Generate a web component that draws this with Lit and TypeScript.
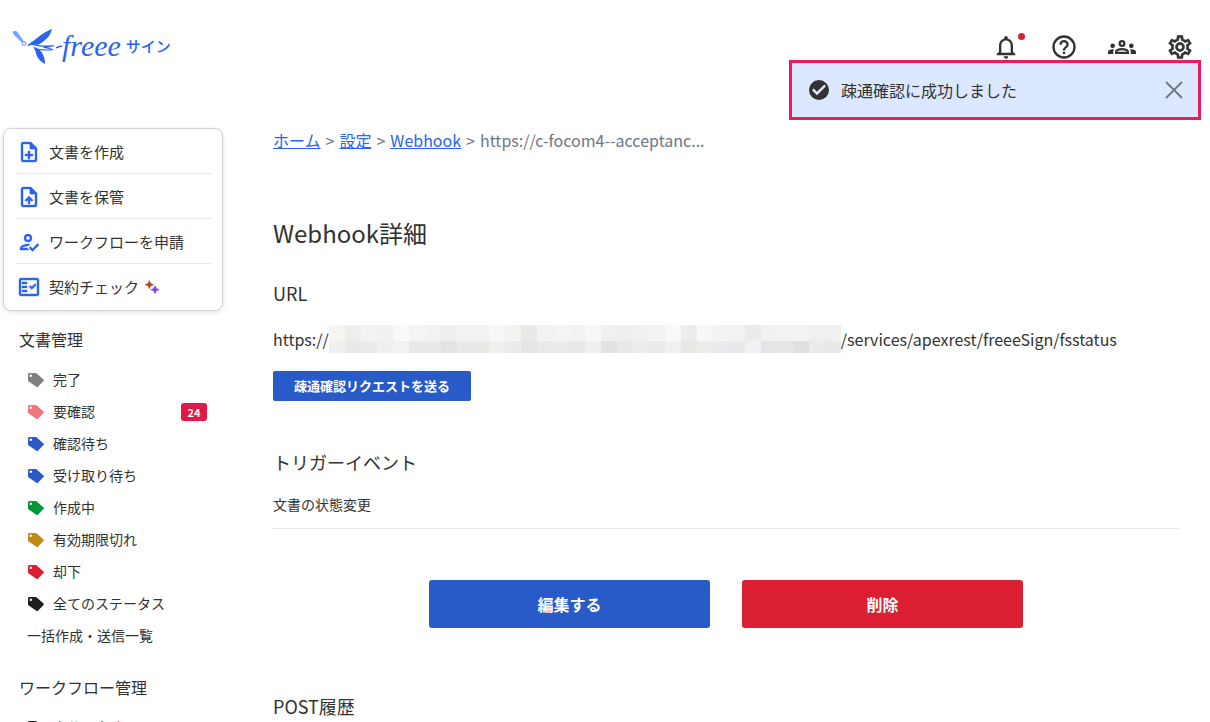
import { LitElement, html, css, svg } from "lit";
import { customElement } from "lit/decorators.js";
import { styleMap } from "lit/directives/style-map.js";

interface Status {
  label: string;
  color: string;
  count?: number;
}

const statuses: Status[] = [
  { label: "完了", color: "#808080" },
  { label: "要確認", color: "#f0757f", count: 24 },
  { label: "確認待ち", color: "#285ac8" },
  { label: "受け取り待ち", color: "#285ac8" },
  { label: "作成中", color: "#00963c" },
  { label: "有効期限切れ", color: "#be8c14" },
  { label: "却下", color: "#dc1e32" },
  { label: "全てのステータス", color: "#1e1e1e" },
];

const icons = {
  create: svg`<path d="M6 2a2 2 0 0 0-2 2v16a2 2 0 0 0 2 2h12a2 2 0 0 0 2-2V8l-6-6Zm0 2h7v5h5v11H6Z" fill-rule="evenodd"/><path d="M13 3v6h6ZM11 11h2v3h3v2h-3v3h-2v-3H8v-2h3Z"/>`,
  store: svg`<path d="M6 2a2 2 0 0 0-2 2v16a2 2 0 0 0 2 2h12a2 2 0 0 0 2-2V8l-6-6Zm0 2h7v5h5v11H6Z" fill-rule="evenodd"/><path d="M13 3v6h6ZM12 11l4.2 4.2-1.4 1.4-1.8-1.7V19h-2v-4.100l-1.800 1.700-1.400-1.400Z"/>`,
  apply: svg`<path d="M11 12a4 4 0 1 0 0-8 4 4 0 0 0 0 8Zm0-6a2 2 0 1 1 0 4 2 2 0 0 1 0-4ZM5 18c.2-.6 3.300-2 6-2l2-2c-4-.5-10 1.300-10 4v2h9l-2-2ZM20.600 13.500 15.500 18.700 13.400 16.600 12 18l3.500 3.500 6.500-6.600Z"/>`,
  check: svg`<path d="M20 3H4a2 2 0 0 0-2 2v14c0 1.100.9 2 2 2h16a2 2 0 0 0 2-2V5a2 2 0 0 0-2-2Zm0 16H4V5h16Z" fill-rule="evenodd"/><path d="M19.400 10 18 8.600l-3.200 3.200-1.400-1.400-1.400 1.400 2.800 2.800ZM5 7h5v2H5ZM5 11h5v2H5ZM5 15h5v2H5Z"/>`,
};

const actions = [
  { label: "文書を作成", icon: icons.create },
  { label: "文書を保管", icon: icons.store },
  { label: "ワークフローを申請", icon: icons.apply },
  { label: "契約チェック", icon: icons.check, sparkle: true },
];

const maskColors = [
  "#f5f5f2 #eeeeee #f3f3f3 #f1f1f1 #f7faf9 #f4f4f2 #f2f2f2 #eeeeee #f2f2f2 #f2f2f2 #f7f7f7 #f3f3f0 #e9e9e9 #f0f3f2 #f4f4f5 #f2f2f2 #f7f7f8 #f0f0f0 #eeeeec #eff2f1 #f3f3f3 #f7faf8 #ededed #f7f7f7 #f1f4f3 #f2f2f2 #e9eceb #f1f1f2 #f1f3f2 #f2f2f2 #f0f0f0 #f0f0f0",
  "#efefef #e9e9e9 #eceae9 #edf0ee #f0f3f2 #e9e9e6 #e9e9e9 #e4e4e4 #e9e9e9 #e9e9e6 #edf0ef #ebebe9 #e5e5e8 #e9ebea #ebebec #eae8e6 #eef0ef #e2e2e2 #e6e9e8 #ececec #ebebe9 #eff1f0 #e8e8e5 #ececec #eaebee #e9e9e9 #f0f1f4 #e5e5e5 #e6e6e6 #dfe0e2 #ebebeb #e9e9e9",
].map((row) => row.split(" "));

@customElement("app-root")
export class AppRoot extends LitElement {
  static styles = css`
    :host {
      display: block;
      height: 100vh;
      overflow: hidden;
      background: #fff;
      color: #323232;
      font-family: "Noto Sans CJK JP", sans-serif;
      font-size: 16px;
      line-height: 24px;
    }
    * { box-sizing: border-box; }
    h1, h2, p, ul, ol { margin: 0; padding: 0; font-weight: 400; }
    ul, ol { list-style: none; }
    a { color: inherit; text-decoration: none; }
    button { font: inherit; border: 0; padding: 0; cursor: pointer; background: none; color: inherit; }
    svg { display: block; flex: none; fill: currentColor; }

    header {
      display: flex;
      justify-content: space-between;
      align-items: center;
      height: 94px;
      padding: 0 16px 0 12px;
    }
    .logo { display: flex; align-items: center; color: #2864f0; }
    .word {
      padding-bottom: 2px;
      font-family: "Liberation Serif", serif;
      font-style: italic;
      font-size: 30px;
      line-height: 36px;
    }
    .product { margin-left: 5px; padding-bottom: 2px; font-size: 15px; font-weight: 500; }
    .tools { display: flex; gap: 30px; }
    .tools button { position: relative; width: 28px; height: 28px; }
    .dot {
      position: absolute;
      top: 0;
      right: -5px;
      width: 7px;
      height: 7px;
      border-radius: 50%;
      background: #dc1e32;
    }

    .toast {
      position: absolute;
      top: 60px;
      right: 9px;
      width: 412px;
      height: 60px;
      display: flex;
      align-items: center;
      gap: 10px;
      padding: 0 12px 0 15px;
      border: 3px solid #f0195f;
      background: #dce8ff;
    }
    .toast p { flex: 1; }
    .close { color: #6e7782; }

    .page { display: flex; gap: 50px; padding: 34px 31px 0 3px; }
    nav.side { width: 220px; flex: none; }
    .card {
      padding: 0 11px 2px 13px;
      border: 1px solid #d7d2d2;
      border-radius: 8px;
      box-shadow: 0 1px 4px rgba(0, 0, 0, 0.14);
      font-size: 15px;
    }
    .card li + li { border-top: 1px solid #e9e7e7; }
    .card a { display: flex; align-items: center; height: 44px; padding-top: 2px; gap: 8px; }
    .card a > svg:first-child { color: #2864f0; stroke: currentColor; stroke-width: 0.4; }
    .card .sparkle { margin-left: -3px; }
    .side h2 { margin: 16px 0 13px 16px; font-size: 16px; }
    .list { font-size: 14px; padding: 0 16px 0 24px; }
    .list a { display: flex; align-items: center; height: 32px; gap: 8px; }
    .label { padding-bottom: 2px; }
    .badge {
      margin-left: auto;
      width: 26px;
      line-height: 18px;
      border-radius: 3px;
      background: #e1194b;
      color: #fff;
      font-size: 11px;
      font-weight: 700;
      text-align: center;
    }
    .side .list + h2 { margin-top: 23px; }

    main { flex: 1; min-width: 0; }
    .crumbs { display: flex; gap: 5px; color: #6e7782; line-height: 24px; }
    .crumbs li { display: flex; gap: 5px; }
    .crumbs a { color: #2864f0; text-decoration: underline; }
    h1 { margin-top: 63px; font-size: 24px; line-height: 36px; }
    main h2 { font-size: 18px; line-height: 28px; }
    .h-url { margin-top: 28px; }
    .url { display: flex; margin-top: 18px; height: 28px; line-height: 28px; }
    .mask {
      display: grid;
      grid-template-columns: repeat(32, 16px);
      grid-template-rows: 16px 12px;
    }
    .btn { border-radius: 3px; background: #285ac8; color: #fff; font-weight: 700; }
    .ping { display: block; margin-top: 18px; height: 30px; padding: 0 21px; font-size: 13px; border-radius: 2px; }
    .h-event { margin-top: 47px; }
    .events { margin-top: 16px; padding-bottom: 12px; border-bottom: 1px solid #e9e7e7; font-size: 14px; }
    .row { display: flex; justify-content: center; gap: 32px; margin-top: 51px; }
    .row .btn { width: 31%; height: 48px; }
    .row .danger { background: #dc1e32; }
    .h-post { margin-top: 64px; }
  `;

  private icon(body: unknown, size = 24, cls = "") {
    return html`<svg class=${cls} width=${size} height=${size} viewBox="0 0 24 24" aria-hidden="true">${body}</svg>`;
  }

  private tag(color: string) {
    return html`<svg width="18" height="18" viewBox="0 0 18 18" aria-hidden="true">
      <path fill=${color} fill-rule="evenodd" d="M1 3.200A1.200 1.200 0 0 1 2.200 2h6.200a2 2 0 0 1 1.400.6l6.700 6a1 1 0 0 1 0 1.500l-5.300 5.500a1.500 1.500 0 0 1-2.200 0L1.700 10.600A2 2 0 0 1 1 9.200ZM3.800 3.600A1.200 1.200 0 1 0 3.800 6a1.200 1.200 0 0 0 0-2.400Z"/></svg>`;
  }

  private logo() {
    return html`<a class="logo" href="#" aria-label="freee サイン">
      <svg width="50" height="36" viewBox="12 30 50 36" aria-hidden="true">
        <path fill="#73a5ff" d="M13.200 32.500c1.400-1.500 3.400-.6 4.800 1.300l5.600 8.200-1.900 1.500-6.800-6.700c-1.500-1.500-2.500-3.200-1.700-4.300Z"/>
        <circle cx="24" cy="44.500" r="1.900" fill="none" stroke="#73a5ff" stroke-width="1.200"/>
        <path d="M52 30c-1.200 6.500-6.200 11.500-13.800 15.800l-8 .3-3 .5 3.800-3C37 39.500 42.500 33.500 52 30Z"/>
        <path d="M33 47.200c2.500 1.600 3.300 1.200 5.300 2.500 4 3.300 7 8.600 6.700 15.300-6.200-3.200-8.800-8.200-9.400-12.500-.8-2-1.600-3.600-2.600-5.300Z"/>
        <path fill="none" stroke="currentColor" stroke-width="1.100" d="M28 46.600c3-2.200 5.500-1.200 8-.3 5 1.800 11 .4 18 .4-4.500.7-7.500 1.700-10.500 1.800 3.500.2 6 .8 9.500 2.300-5 0-9 .9-14.500-.6"/>
        <path fill="none" stroke="currentColor" stroke-width="1.600" d="M56 48.800c2-.8 3.500-1.600 6-1.800"/>
      </svg>
      <span class="word">freee</span><span class="product">サイン</span>
    </a>`;
  }

  render() {
    return html`
      <header>
        ${this.logo()}
        <div class="tools">
          <button aria-label="通知">
            ${this.icon(svg`<path d="M12 22a2 2 0 0 0 2-2h-4a2 2 0 0 0 2 2Zm6-6v-5c0-3.070-1.630-5.640-4.500-6.320V4a1.500 1.500 0 0 0-3 0v.68C7.640 5.360 6 7.920 6 11v5l-2 2v1h16v-1Zm-2 1H8v-6c0-2.480 1.510-4.500 4-4.500s4 2.020 4 4.500Z"/>`, 28)}
            <span class="dot"></span>
          </button>
          <button aria-label="ヘルプ">
            ${this.icon(svg`<path d="M11 18h2v-2h-2Zm1-16a10 10 0 1 0 0 20 10 10 0 0 0 0-20Zm0 18a8 8 0 1 1 0-16 8 8 0 0 1 0 16Zm0-14a4 4 0 0 0-4 4h2c0-1.100.9-2 2-2s2 .9 2 2c0 2-3 1.750-3 5h2c0-2.250 3-2.500 3-5a4 4 0 0 0-4-4Z"/>`, 28)}
          </button>
          <button aria-label="メンバー">
            ${this.icon(svg`<path d="M4 13a2 2 0 1 0 0-4 2 2 0 0 0 0 4Zm1.130 1.100A7 7 0 0 0 4 14c-.99 0-1.930.21-2.780.58A2.010 2.010 0 0 0 0 16.430V18h4.500v-1.610c0-.83.23-1.610.63-2.290ZM20 13a2 2 0 1 0 0-4 2 2 0 0 0 0 4Zm4 3.430c0-.81-.48-1.530-1.220-1.850A7 7 0 0 0 20 14c-.39 0-.76.04-1.130.1.4.68.63 1.460.63 2.290V18H24Zm-7.760-2.780A10.500 10.500 0 0 0 12 12.750c-1.630 0-3.070.39-4.240.9A2.990 2.990 0 0 0 6 16.390V18h12v-1.610c0-1.180-.68-2.260-1.760-2.740ZM8.070 16c.09-.23.13-.39.91-.69.97-.38 1.990-.56 3.020-.56s2.050.18 3.020.56c.77.3.81.46.91.69ZM12 8a1 1 0 1 1 0 2 1 1 0 0 1 0-2Zm0-2a3 3 0 1 0 0 6 3 3 0 0 0 0-6Z"/>`, 28)}
          </button>
          <button aria-label="設定">
            ${this.icon(svg`<path d="M19.430 12.980c.04-.32.07-.64.07-.98s-.03-.66-.07-.98l2.110-1.650a.5.5 0 0 0 .12-.64l-2-3.460a.5.5 0 0 0-.61-.22l-2.490 1a7.300 7.300 0 0 0-1.690-.98l-.38-2.650A.49.49 0 0 0 14 2h-4a.49.49 0 0 0-.49.42l-.38 2.650c-.61.25-1.170.59-1.690.98l-2.490-1a.5.5 0 0 0-.61.22l-2 3.460a.49.49 0 0 0 .12.64l2.110 1.650a7.900 7.900 0 0 0 0 1.960l-2.110 1.650a.5.5 0 0 0-.12.64l2 3.460c.12.220.39.3.61.220l2.490-1c.52.4 1.080.73 1.690.98l.38 2.650c.03.24.24.42.49.42h4c.25 0 .46-.18.49-.42l.38-2.650a7.700 7.700 0 0 0 1.690-.98l2.490 1c.23.09.49 0 .61-.22l2-3.460a.5.5 0 0 0-.12-.64Zm-1.980-1.710c.04.31.05.52.05.73s-.02.43-.05.73l-.14 1.130.89.7 1.080.84-.7 1.210-1.270-.51-1.040-.42-.9.680c-.43.32-.84.56-1.250.73l-1.060.43-.16 1.130-.2 1.350h-1.400l-.19-1.350-.16-1.130-1.060-.43c-.43-.18-.83-.41-1.230-.71l-.91-.7-1.060.43-1.270.51-.7-1.210 1.080-.84.89-.7-.14-1.130a7 7 0 0 1 0-1.470l.14-1.130-.89-.7-1.080-.84.7-1.210 1.270.51 1.040.42.9-.68c.43-.32.84-.56 1.250-.73l1.060-.43.16-1.130.2-1.350h1.390l.19 1.350.16 1.130 1.060.43c.43.18.83.41 1.230.71l.91.7 1.060-.43 1.270-.51.7 1.210-1.070.85-.89.7ZM12 8a4 4 0 1 0 0 8 4 4 0 0 0 0-8Zm0 6a2 2 0 1 1 0-4 2 2 0 0 1 0 4Z" fill-rule="evenodd" stroke="currentColor" stroke-width=".3"/>`, 28)}
          </button>
        </div>
      </header>

      <div class="toast" role="status">
        ${this.icon(svg`<path fill-rule="evenodd" d="M12 2a10 10 0 1 0 0 20 10 10 0 0 0 0-20Zm-2 15.200-5-5L6.700 10.500l3.300 3.300 7.300-7.300L19 8.200Z"/>`, 24)}
        <p>疎通確認に成功しました</p>
        <button class="close" aria-label="閉じる">
          ${this.icon(svg`<path d="m4.500 4.500 15 15M19.500 4.500l-15 15" fill="none" stroke="currentColor" stroke-width="1.800" stroke-linecap="round"/>`, 24)}
        </button>
      </div>

      <div class="page">
        <nav class="side">
          <ul class="card">
            ${actions.map(
              (a) => html`<li><a href="#">${this.icon(a.icon)}<span>${a.label}</span>
                ${a.sparkle
                  ? this.icon(svg`<path fill="#be4619" d="M8 1.500l2.300 4.900 5 2.100-5 2.100L8 15.500l-2.300-4.900-5-2.100 5-2.100Z"/><path fill="#8246e6" d="M16.500 9l2.300 4.900 5 2.100-5 2.100-2.300 4.900-2.300-4.900-5-2.100 5-2.100Z"/>`, 16, "sparkle")
                  : ""}</a></li>`
            )}
          </ul>
          <h2>文書管理</h2>
          <ul class="list">
            ${statuses.map(
              (s) => html`<li><a href="#">${this.tag(s.color)}<span class="label">${s.label}</span>${s.count ? html`<span class="badge">${s.count}</span>` : ""}</a></li>`
            )}
            <li><a href="#"><span class="label">一括作成・送信一覧</span></a></li>
          </ul>
          <h2>ワークフロー管理</h2>
          <ul class="list">
            <li><a href="#">${this.tag("#1e1e1e")}<span class="label">自分の申請</span></a></li>
          </ul>
        </nav>

        <main>
          <ol class="crumbs">
            <li><a href="#">ホーム</a><span>&gt;</span></li>
            <li><a href="#">設定</a><span>&gt;</span></li>
            <li><a href="#">Webhook</a><span>&gt;</span></li>
            <li>https://c-focom4--acceptanc...</li>
          </ol>
          <h1>Webhook詳細</h1>
          <h2 class="h-url">URL</h2>
          <p class="url">
            <span>https://</span>
            <span class="mask">${maskColors.flat().map((c) => html`<i style=${styleMap({ background: c })}></i>`)}</span>
            <span>/services/apexrest/freeeSign/fsstatus</span>
          </p>
          <button class="btn ping">疎通確認リクエストを送る</button>
          <h2 class="h-event">トリガーイベント</h2>
          <p class="events">文書の状態変更</p>
          <div class="row">
            <button class="btn">編集する</button>
            <button class="btn danger">削除</button>
          </div>
          <h2 class="h-post">POST履歴</h2>
        </main>
      </div>
    `;
  }
}
